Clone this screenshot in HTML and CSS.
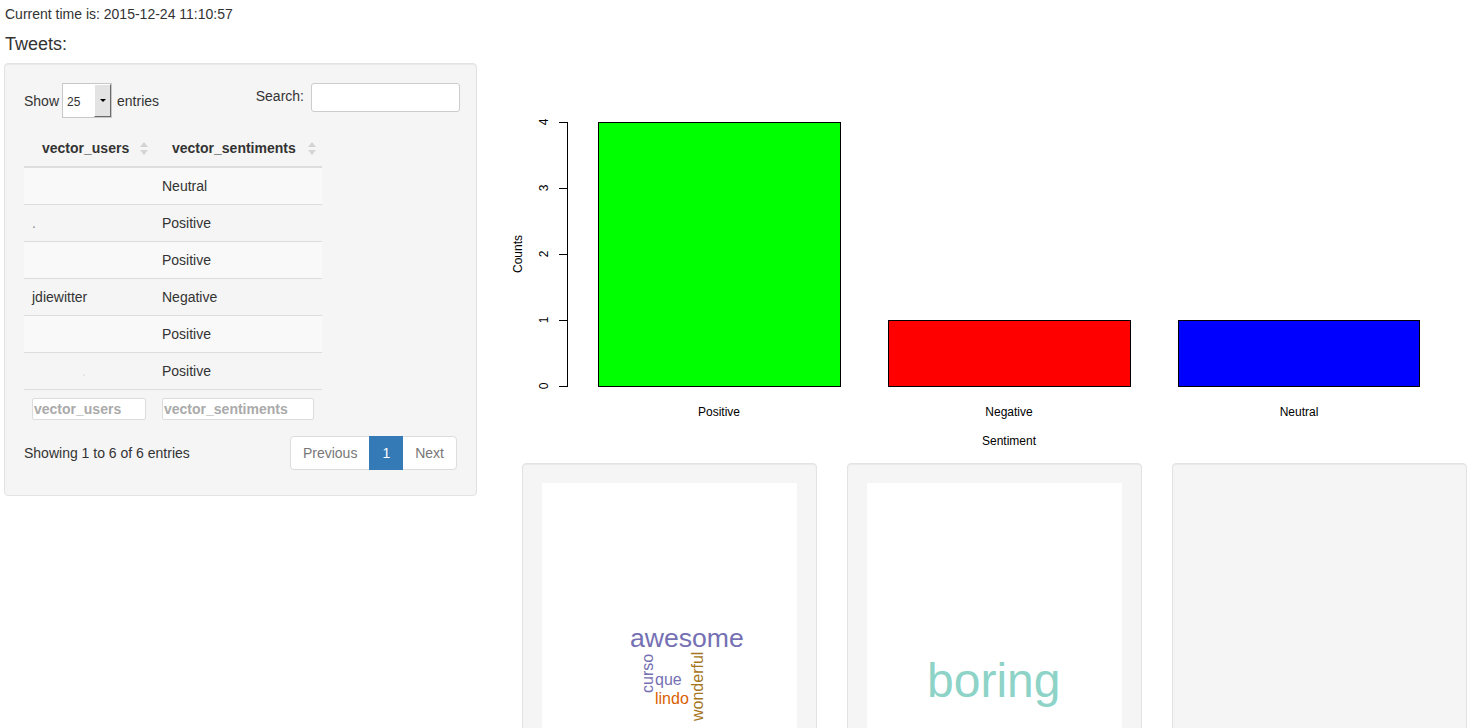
FILE: index.html
```html
<!DOCTYPE html>
<html>
<head>
  <meta charset="utf-8">
  <title>Twitter Sentiment</title>
  <link rel="stylesheet" href="styles.css">
</head>
<body>
  <div class="clock">Current time is: 2015-12-24 11:10:57</div>

  <div class="layout">
    <!-- left: tweets table -->
    <div class="sidebar">
      <h4 class="section-title">Tweets:</h4>
      <div class="well">
        <div class="dt-top">
          <div class="dt-length">
            <span>Show</span>
            <span class="fake-select">
              <span class="fake-select-value">25</span>
              <span class="fake-select-btn"><span class="caret"></span></span>
            </span>
            <span>entries</span>
          </div>
          <div class="dt-search">
            <label for="search">Search:</label>
            <input type="text" id="search">
          </div>
        </div>

        <table class="dt-table">
          <colgroup>
            <col class="col-users">
            <col class="col-sent">
          </colgroup>
          <thead>
            <tr>
              <th>
                <div class="th-inner">vector_users
                  <svg class="sort-icon" width="8" height="13" viewBox="0 0 8 13"><polygon points="0,5 4,0 8,5" /><polygon points="0,8 8,8 4,13" /></svg>
                </div>
              </th>
              <th>
                <div class="th-inner">vector_sentiments
                  <svg class="sort-icon" width="8" height="13" viewBox="0 0 8 13"><polygon points="0,5 4,0 8,5" /><polygon points="0,8 8,8 4,13" /></svg>
                </div>
              </th>
            </tr>
          </thead>
          <tbody>
            <tr><td></td><td>Neutral</td></tr>
            <tr><td><span class="faint">.</span></td><td>Positive</td></tr>
            <tr><td></td><td>Positive</td></tr>
            <tr><td>jdiewitter</td><td>Negative</td></tr>
            <tr><td></td><td>Positive</td></tr>
            <tr><td><span class="faint far">.</span></td><td>Positive</td></tr>
          </tbody>
          <tfoot>
            <tr>
              <td><input type="text" class="col-filter" placeholder="vector_users"></td>
              <td><input type="text" class="col-filter" placeholder="vector_sentiments"></td>
            </tr>
          </tfoot>
        </table>

        <div class="dt-bottom">
          <div class="dt-info">Showing 1 to 6 of 6 entries</div>
          <ul class="pagination">
            <li class="disabled"><a href="#">Previous</a></li>
            <li class="active"><a href="#">1</a></li>
            <li class="disabled"><a href="#">Next</a></li>
          </ul>
        </div>
      </div>
    </div>

    <!-- right: bar plot + word clouds -->
    <div class="main">
      <svg class="plot" width="972" height="400" viewBox="0 0 972 400">
        <g stroke="#000" stroke-width="1">
          <line x1="60.5" y1="59" x2="60.5" y2="324" />
          <line x1="52" y1="59.5" x2="61" y2="59.5" />
          <line x1="52" y1="125.5" x2="61" y2="125.5" />
          <line x1="52" y1="191.5" x2="61" y2="191.5" />
          <line x1="52" y1="257.5" x2="61" y2="257.5" />
          <line x1="52" y1="323.5" x2="61" y2="323.5" />
        </g>
        <g class="plot-text" text-anchor="middle">
          <text transform="translate(41,59) rotate(-90)">4</text>
          <text transform="translate(41,125) rotate(-90)">3</text>
          <text transform="translate(41,191) rotate(-90)">2</text>
          <text transform="translate(41,257) rotate(-90)">1</text>
          <text transform="translate(41,323) rotate(-90)">0</text>
          <text transform="translate(15,191) rotate(-90)">Counts</text>
          <text x="212" y="353">Positive</text>
          <text x="502" y="353">Negative</text>
          <text x="792" y="353">Neutral</text>
          <text x="502" y="382">Sentiment</text>
        </g>
        <rect x="91.5" y="59.5" width="242" height="264" fill="#00ff00" stroke="#000" />
        <rect x="381.5" y="257.5" width="242" height="66" fill="#ff0000" stroke="#000" />
        <rect x="671.5" y="257.5" width="241" height="66" fill="#0000ff" stroke="#000" />
      </svg>

      <div class="clouds">
        <div class="well">
          <svg class="cloud" width="255" height="400" viewBox="0 0 255 400">
            <text class="cloud-word" x="88" y="164" font-size="26.6" fill="#7570b3">awesome</text>
            <text class="cloud-word" transform="translate(111,210) rotate(-90)" font-size="16" fill="#7570b3">curso</text>
            <text class="cloud-word" x="113" y="202" font-size="16" fill="#7570b3">que</text>
            <text class="cloud-word" x="113" y="221" font-size="16" fill="#d95f02">lindo</text>
            <text class="cloud-word" transform="translate(161,238) rotate(-90)" font-size="16" fill="#a6761d">wonderful</text>
          </svg>
        </div>
        <div class="well">
          <svg class="cloud" width="255" height="400" viewBox="0 0 255 400">
            <text class="cloud-word" x="60" y="214" font-size="48" fill="#8dd3c7">boring</text>
          </svg>
        </div>
        <div class="well"></div>
      </div>
    </div>
  </div>
</body>
</html>
```

FILE: styles.css
```css
html,
body {
  margin: 0;
  overflow: hidden;
}

body {
  font-family: "Liberation Sans", Arial, Helvetica, sans-serif;
  font-size: 14px;
  line-height: 20px;
  color: #333;
  background: #fff;
  padding: 4px 4px 0;
}

.clock {
  padding-left: 1px;
}

.layout {
  display: flex;
  align-items: flex-start;
}

.sidebar {
  width: 473px;
  flex-shrink: 0;
}

.section-title {
  font-size: 18px;
  font-weight: normal;
  line-height: 20px;
  margin: 10px 0 9px 1px;
}

.well {
  background: #f5f5f5;
  border: 1px solid #e3e3e3;
  border-radius: 4px;
  padding: 19px;
  box-shadow: inset 0 1px 1px rgba(0,0,0,0.05);
}

/* datatable controls */
.dt-top {
  display: flex;
  justify-content: space-between;
  align-items: flex-start;
}

.dt-length {
  display: flex;
  align-items: center;
  height: 35px;
}

.fake-select {
  display: flex;
  width: 50px;
  height: 35px;
  box-sizing: border-box;
  border: 1px solid #c8c8c8;
  background: white;
  margin: 0 5px 0 3px;
}

.fake-select-value {
  flex: 1;
  font-size: 12px;
  padding-left: 4px;
  display: flex;
  align-items: center;
  padding-top: 2px;
}

.fake-select-btn {
  width: 17px;
  box-sizing: border-box;
  background: #e3e3e3;
  border-top: 1px solid #fff;
  border-left: 1px solid #fff;
  border-right: 1px solid #6a6a6a;
  border-bottom: 1px solid #6a6a6a;
  display: flex;
  align-items: center;
  justify-content: center;
}

.caret {
  width: 0;
  height: 0;
  border-left: 3px solid transparent;
  border-right: 3px solid transparent;
  border-top: 3px solid #000;
}

.dt-search {
  display: flex;
  align-items: center;
  margin-right: -3px;
}

.dt-search label {
  margin-top: -4px;
}

.dt-search input {
  width: 149px;
  height: 29px;
  box-sizing: border-box;
  border: 1px solid #ccc;
  border-radius: 3px;
  margin-left: 7px;
  background: white;
}

/* table */
.dt-table {
  border-collapse: collapse;
  table-layout: fixed;
  width: 298px;
  margin-top: 8px;
}

.col-users {
  width: 130px;
}

.col-sent {
  width: 168px;
}

.dt-table th {
  padding: 12px 6px 8px 18px;
  border-bottom: 2px solid #ddd;
  text-align: left;
  font-weight: bold;
}

.th-inner {
  display: flex;
  justify-content: space-between;
  align-items: center;
  white-space: nowrap;
}

.sort-icon {
  fill: #d4d4d4;
  flex-shrink: 0;
}

.dt-table td {
  padding: 8px;
  height: 20px;
}

.dt-table tbody td {
  border-bottom: 1px solid #ddd;
}

.dt-table tbody tr:nth-child(odd) {
  background: #f9f9f9;
}

.faint {
  color: #888;
}

.faint.far {
  color: #ddd;
  padding-left: 50px;
}

.col-filter {
  display: block;
  width: 100%;
  height: 22px;
  box-sizing: border-box;
  border: 1px solid #ddd;
  border-radius: 2px;
  padding: 0 1px;
  font-family: "Liberation Sans", Arial, sans-serif;
  font-size: 14px;
  font-weight: bold;
  background: white;
}

.col-filter::placeholder {
  color: #aaa;
}

.dt-bottom {
  display: flex;
  justify-content: space-between;
  align-items: center;
  margin-top: 8px;
  padding-bottom: 6px;
}

.pagination {
  display: flex;
  list-style: none;
  margin: 0;
  padding: 0;
}

.pagination a {
  display: block;
  padding: 6px 12px;
  line-height: 20px;
  border: 1px solid #ddd;
  margin-left: -1px;
  background: white;
  color: #777;
  text-decoration: none;
}

.pagination li:first-child a {
  margin-left: 0;
  border-radius: 4px 0 0 4px;
}

.pagination li:last-child a {
  border-radius: 0 4px 4px 0;
}

.pagination .active a {
  background: #337ab7;
  border-color: #337ab7;
  color: white;
  position: relative;
}

/* right side */
.main {
  width: 972px;
  flex-shrink: 0;
  margin-left: 30px;
  margin-top: 39px;
}

.plot {
  display: block;
}

.plot-text {
  font-family: "Liberation Sans", Arial, sans-serif;
  font-size: 12px;
  fill: #000;
}

.clouds {
  display: grid;
  grid-template-columns: repeat(3, 295px);
  gap: 30px;
  padding-left: 15px;
}

.cloud {
  display: block;
  background: white;
}

.cloud-word {
  font-family: "Liberation Sans", Arial, sans-serif;
}
```
